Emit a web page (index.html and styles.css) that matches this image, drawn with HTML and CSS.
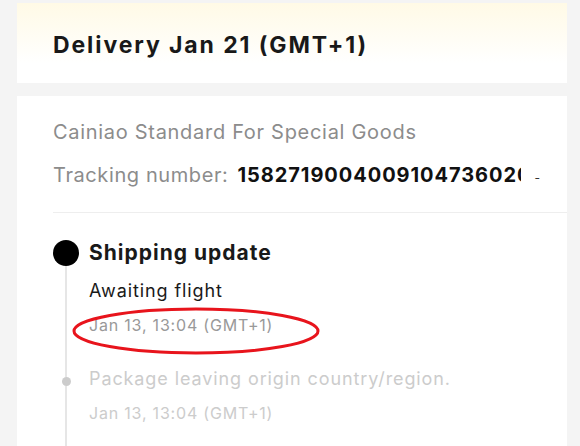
FILE: index.html
```html
<!DOCTYPE html>
<html>
<head>
<meta charset="utf-8">
<link rel="stylesheet" href="styles.css">
</head>
<body>
<div class="page">
  <section class="header-card">
    <h1 class="title">Delivery Jan 21 (GMT+1)</h1>
  </section>
  <section class="card">
    <div class="carrier">Cainiao Standard For Special Goods</div>
    <div class="tracking">
      <span class="label">Tracking number:</span>
      <span class="number">1582719004009104736020</span>
      <span class="copy">-</span>
    </div>
    <div class="divider"></div>
    <div class="timeline">
      <div class="item item-active">
        <div class="marker"><span class="dot-big"></span><span class="line"></span></div>
        <div class="content">
          <div class="status">Shipping update</div>
          <div class="desc">Awaiting flight</div>
          <div class="time">Jan 13, 13:04 (GMT+1)</div>
        </div>
      </div>
      <div class="item item-past">
        <div class="marker"><span class="line-top"></span><span class="dot-small"></span><span class="line"></span></div>
        <div class="content">
          <div class="desc">Package leaving origin country/region.</div>
          <div class="time">Jan 13, 13:04 (GMT+1)</div>
        </div>
      </div>
    </div>
    <svg class="annotation" width="252" height="52" viewBox="0 0 252 52">
      <ellipse cx="125" cy="25" rx="122" ry="22" fill="none" stroke="#e8141c" stroke-width="3"/>
    </svg>
  </section>
</div>
</body>
</html>
```
FILE: styles.css
```css
* { box-sizing: border-box; }
html, body { margin: 0; padding: 0; }
body {
  background: #f4f4f4;
  font-family: Inter, Lato, sans-serif;
  width: 580px;
  height: 446px;
  overflow: hidden;
}
.page {
  padding: 3px 13px 0 17px;
  display: flex;
  flex-direction: column;
  gap: 13px;
}
.header-card {
  height: 80px;
  background: linear-gradient(180deg, #fffae6 0%, #fffdf5 45%, #ffffff 75%);
  padding: 0 0 0 36px;
  display: flex;
  align-items: center;
}
.title {
  margin: 0;
  font-size: 23px;
  font-weight: 700;
  letter-spacing: 1.9px;
  color: #191919;
  padding-top: 3px;
}
.card {
  position: relative;
  background: #fff;
  padding: 22px 0 0 36px;
  height: 360px;
}
.carrier {
  font-size: 20px;
  line-height: 28px;
  letter-spacing: 0.7px;
  color: #8c8c8c;
}
.tracking {
  display: flex;
  align-items: baseline;
  margin-top: 15px;
  font-size: 20px;
  line-height: 28px;
  white-space: nowrap;
}
.label { color: #8c8c8c; margin-right: 9px; letter-spacing: 0.6px; }
.number {
  font-weight: 700;
  color: #111;
  width: 284px;
  letter-spacing: 0.95px;
  overflow: hidden;
  display: inline-block;
}
.copy {
  color: #333;
  font-size: 12px;
  margin-left: 13px;
}
.divider {
  height: 1px;
  background: #eeeeee;
  margin-top: 20px;
}
.timeline {
  padding-top: 27px;
}
.item {
  display: grid;
  grid-template-columns: 26px 1fr;
  column-gap: 10px;
}
.marker {
  display: flex;
  flex-direction: column;
  align-items: center;
}
.dot-big {
  width: 26px;
  height: 26px;
  border-radius: 50%;
  background: #000;
  flex: none;
}
.dot-small {
  width: 9px;
  height: 9px;
  border-radius: 50%;
  background: #cccccc;
  flex: none;
}
.line, .line-top {
  width: 2px;
  background: #e6e6e6;
}
.line { flex: 1; }
.line-top { height: 13px; flex: none; }
.status {
  font-size: 21px;
  font-weight: 700;
  letter-spacing: 1px;
  color: #191919;
  line-height: 26px;
}
.desc {
  font-size: 18px;
  line-height: 26px;
  letter-spacing: 0.9px;
  color: #191919;
}
.item-active .desc { margin-top: 12px; }
.time {
  font-size: 16px;
  line-height: 22px;
  letter-spacing: 0.8px;
  color: #999;
  margin-top: 10px;
}
.item-active .content { padding-bottom: 28px; }
.item-past .content { padding-top: 2px; padding-bottom: 30px; }
.item-past .desc, .item-past .time { color: #cccccc; }
.annotation {
  position: absolute;
  left: 54px;
  top: 210px;
}
```
